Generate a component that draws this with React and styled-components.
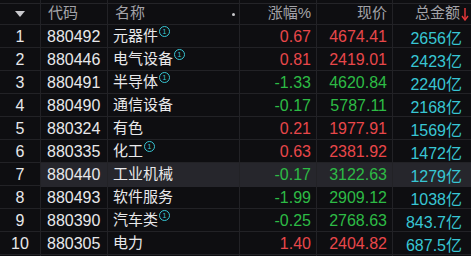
import React from 'react';
import styled, { createGlobalStyle } from 'styled-components';

const GlobalStyle = createGlobalStyle`
  html, body {
    margin: 0;
    padding: 0;
    background: #0e0e11;
  }
  body {
    font-family: "Liberation Sans", "Noto Sans CJK SC", sans-serif;
  }
`;

const COLS = '41px 67px 132px 77px 76px 78px';

const Board = styled.div`
  width: 471px;
  height: 256px;
  overflow: hidden;
  background: #0e0e11;
  /* 顶部残留的分隔线 */
  background-image: linear-gradient(#242428, #242428);
  background-size: 100% 1px;
  background-position: 0 3px;
  background-repeat: no-repeat;
`;

const Row = styled.div`
  display: grid;
  grid-template-columns: ${COLS};
  height: ${(p) => (p.$head ? 25 : 23)}px;
  box-sizing: border-box;
  border-bottom: 1px solid #222226;
`;

const Cell = styled.div`
  display: flex;
  align-items: center;
  justify-content: ${(p) => p.$align || 'flex-start'};
  padding: ${(p) => p.$pad || '0'};
  box-sizing: border-box;
  border-right: 1px solid #222226;
  background: ${(p) => (p.$active ? '#26262c' : 'transparent')};
  color: ${(p) => p.$color || '#e8e8ea'};
  font-size: 16px;
  white-space: nowrap;
  position: relative;
  &:last-child {
    border-right: none;
  }
`;

const HeadText = styled.span`
  color: #a3a3a8;
  font-size: 15px;
  line-height: 16px;
  margin-top: 1px;
`;

const Name = styled.span`
  font-size: 15px;
  line-height: 16px;
  margin-top: -3px;
  color: #e8e8ea;
`;

const Mark = styled.span`
  display: inline-block;
  width: 9px;
  height: 9px;
  border: 1px solid #38c6d4;
  border-radius: 50%;
  color: #38c6d4;
  font-size: 7px;
  line-height: 9px;
  text-align: center;
  margin-left: 1px;
  align-self: flex-start;
  margin-top: 1px;
`;

const Dot = styled.span`
  position: absolute;
  right: 4px;
  top: 13px;
  width: 3px;
  height: 3px;
  border-radius: 50%;
  background: #c8c8cc;
`;

const RED = '#e8474a';
const GREEN = '#2dbb45';
const CYAN = '#38c6d4';

const rows = [
  ['880492', '元器件', true, '0.67', '4674.41', '2656亿'],
  ['880446', '电气设备', true, '0.81', '2419.01', '2423亿'],
  ['880491', '半导体', true, '-1.33', '4620.84', '2240亿'],
  ['880490', '通信设备', false, '-0.17', '5787.11', '2168亿'],
  ['880324', '有色', false, '0.21', '1977.91', '1569亿'],
  ['880335', '化工', true, '0.63', '2381.92', '1472亿'],
  ['880440', '工业机械', false, '-0.17', '3122.63', '1279亿'],
  ['880493', '软件服务', false, '-1.99', '2909.12', '1038亿'],
  ['880390', '汽车类', true, '-0.25', '2768.63', '843.7亿'],
  ['880305', '电力', false, '1.40', '2404.82', '687.5亿'],
];

const App = () => {
  return (
    <Board>
      <GlobalStyle />
      <Row $head>
        <Cell $align="center">
          <svg width="12" height="8" viewBox="0 0 12 8" style={{ marginTop: 3 }}>
            <path d="M1 1 L11 1 L6 7 Z" fill="#c8c8cc" />
          </svg>
        </Cell>
        <Cell $pad="0 0 0 7px"><HeadText>代码</HeadText></Cell>
        <Cell $pad="0 0 0 7px">
          <HeadText>名称</HeadText>
          <Dot />
        </Cell>
        <Cell $align="flex-end" $pad="0 5px 0 0"><HeadText>涨幅%</HeadText></Cell>
        <Cell $align="flex-end" $pad="0 5px 0 0"><HeadText>现价</HeadText></Cell>
        <Cell $align="flex-end" $pad="0 2px 0 0">
          <HeadText>总金额</HeadText>
          <svg width="8" height="14" viewBox="0 0 8 14" style={{ marginTop: 4, marginLeft: 1 }}>
            <path d="M4 1 L4 12" stroke="#e8373a" strokeWidth="1.4" />
            <path d="M1 9 L4 13 L7 9" stroke="#e8373a" strokeWidth="1.4" fill="none" />
          </svg>
        </Cell>
      </Row>
      {rows.map(([code, name, mark, pct, price, amt], i) => {
        const color = pct.startsWith('-') ? GREEN : RED;
        const active = i === 6;
        return (
          <Row key={code}>
            <Cell $align="center">{i + 1}</Cell>
            <Cell $active={active} $pad="0 0 0 6px">{code}</Cell>
            <Cell $active={active} $pad="0 0 0 5px">
              <Name>{name}</Name>
              {mark && <Mark>1</Mark>}
            </Cell>
            <Cell $active={active} $align="flex-end" $pad="0 5px 0 0" $color={color}>{pct}</Cell>
            <Cell $active={active} $align="flex-end" $pad="0 5px 0 0" $color={color}>{price}</Cell>
            <Cell $active={active} $align="flex-end" $pad="0 9px 0 0" $color={CYAN}>{amt}</Cell>
          </Row>
        );
      })}
    </Board>
  );
};

export default App;
